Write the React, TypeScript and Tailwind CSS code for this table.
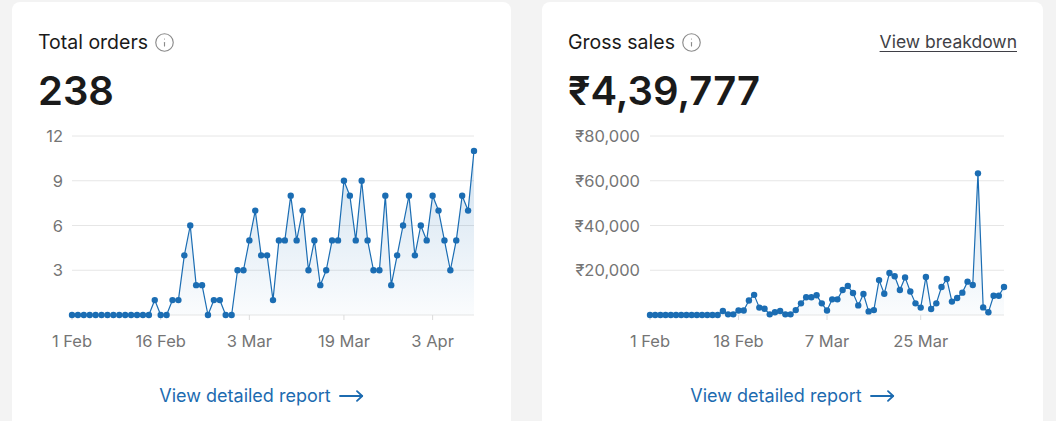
import React from 'react';
import { Info } from 'lucide-react';

const orders = [
  0, 0, 0, 0, 0, 0, 0, 0, 0, 0, 0, 0, 0, 0,
  1, 0, 0, 1, 1, 4, 6, 2, 2, 0, 1, 1, 0, 0,
  3, 3, 5, 7, 4, 4, 1, 5, 5, 8, 5, 7, 3, 5, 2, 3, 5, 5,
  9, 8, 5, 9, 5, 3, 3, 8, 2, 4, 6, 8, 4, 6, 5, 8, 7, 5, 3, 5, 8, 7, 11,
];

const sales = [
  0, 0, 0, 0, 0, 0, 0, 0, 0, 0, 0, 0, 0, 0,
  1800, 300, 300, 2000, 2000, 6500, 9000, 3300, 2800, 300, 1200, 1800, 300, 300,
  2200, 5200, 7900, 7900, 8800, 5200, 2000, 7000, 7000, 11200, 13000, 9800, 4300,
  9400, 1600, 2200, 15600, 9500, 18800, 17300, 11200, 16800, 10500, 5200, 3300,
  17000, 2700, 5200, 12500, 16100, 6000, 7600, 10000, 14900, 13400, 63300, 3400,
  1200, 8600, 8600, 12500,
];

interface ChartProps {
  id: string;
  data: number[];
  max: number;
  yTicks: { value: number; label: string }[];
  xTicks: { index: number; label: string }[];
  left: number;
  labelRight: number;
}

const TOP = 16;
const BOTTOM = 195;
const RIGHT = 436;

const LineChart: React.FC<ChartProps> = ({ id, data, max, yTicks, xTicks, left, labelRight }) => {
  const step = (RIGHT - left) / (data.length - 1);
  const px = (i: number) => left + i * step;
  const py = (v: number) => BOTTOM - (v / max) * (BOTTOM - TOP);
  const line = data.map((v, i) => `${i === 0 ? 'M' : 'L'}${px(i).toFixed(2)},${py(v).toFixed(2)}`).join(' ');
  const area = `${line} L${px(data.length - 1).toFixed(2)},${BOTTOM} L${left},${BOTTOM} Z`;

  return (
    <svg width="449" height="236" className="block" style={{ fontFamily: 'Inter, "Noto Sans", sans-serif' }}>
      <defs>
        <linearGradient id={id} x1="0" y1={TOP} x2="0" y2={BOTTOM} gradientUnits="userSpaceOnUse">
          <stop offset="0" stopColor="#1b6db3" stopOpacity="0.22" />
          <stop offset="1" stopColor="#1b6db3" stopOpacity="0.02" />
        </linearGradient>
      </defs>
      {yTicks.map((t) => (
        <g key={t.label}>
          <line x1={left} x2={RIGHT} y1={py(t.value)} y2={py(t.value)} stroke="#e6e6e6" strokeWidth="1" />
          <text x={labelRight} y={py(t.value) + 6} textAnchor="end" fontSize="16.5" fill="#757575">
            {t.label}
          </text>
        </g>
      ))}
      <line x1={left} x2={RIGHT} y1={BOTTOM} y2={BOTTOM} stroke="#e6e6e6" strokeWidth="1" />
      {xTicks.map((t) => (
        <g key={t.label}>
          <line x1={px(t.index)} x2={px(t.index)} y1={BOTTOM} y2={BOTTOM + 5} stroke="#dcdcdc" strokeWidth="1" />
          <text x={px(t.index)} y={BOTTOM + 32} textAnchor="middle" fontSize="16.5" fill="#757575">
            {t.label}
          </text>
        </g>
      ))}
      <path d={area} fill={`url(#${id})`} />
      <path d={line} fill="none" stroke="#1b6db3" strokeWidth="1.2" strokeLinejoin="round" />
      {data.map((v, i) => (
        <circle key={i} cx={px(i)} cy={py(v)} r="3.2" fill="#1b6db3" />
      ))}
    </svg>
  );
};

const DetailLink: React.FC = () => (
  <div className="mt-[26px] flex justify-center">
    <a href="#" className="flex items-center gap-2 text-[18px] text-[#1c6bb0]">
      View detailed report
      <svg width="25" height="12" viewBox="0 0 25 12" fill="none" stroke="#1c6bb0" strokeWidth="1.8" strokeLinecap="round" strokeLinejoin="round">
        <path d="M1 6h22" />
        <path d="M18 1.2 23.2 6 18 10.8" />
      </svg>
    </a>
  </div>
);

const App: React.FC = () => {
  return (
    <div
      className="flex h-[421px] gap-[31px] overflow-hidden bg-[#f3f3f3] pl-3 pr-[13px] pt-[2px]"
      style={{ fontFamily: 'Inter, "Noto Sans", sans-serif' }}
    >
      <div className="h-[440px] w-[499px] rounded-lg bg-white px-[26px] pt-[26px]">
        <div className="flex items-center">
          <h2 className="text-[19.5px] leading-7 text-[#1a1a1a]">Total orders</h2>
          <Info size={21} strokeWidth={1.3} className="ml-[6px] text-[#8a8a8a]" />
        </div>
        <div className="mt-[11px] text-[40px] font-semibold leading-[48px] text-[#1a1a1a]">238</div>
        <div className="mt-[5px]">
          <LineChart
            id="ordersFill"
            data={orders}
            max={12}
            left={34}
            labelRight={25}
            yTicks={[
              { value: 12, label: '12' },
              { value: 9, label: '9' },
              { value: 6, label: '6' },
              { value: 3, label: '3' },
            ]}
            xTicks={[
              { index: 0, label: '1 Feb' },
              { index: 15, label: '16 Feb' },
              { index: 30, label: '3 Mar' },
              { index: 46, label: '19 Mar' },
              { index: 61, label: '3 Apr' },
            ]}
          />
        </div>
        <DetailLink />
      </div>

      <div className="h-[440px] flex-1 rounded-lg bg-white px-[26px] pt-[26px]">
        <div className="flex items-center justify-between">
          <div className="flex items-center">
            <h2 className="text-[19.5px] leading-7 text-[#1a1a1a]">Gross sales</h2>
            <Info size={21} strokeWidth={1.3} className="ml-[6px] text-[#8a8a8a]" />
          </div>
          <a href="#" className="text-[17.5px] text-[#3f3f46] underline underline-offset-[3px]">
            View breakdown
          </a>
        </div>
        <div className="mt-[11px] text-[40px] font-semibold leading-[48px] text-[#1a1a1a]">₹4,39,777</div>
        <div className="mt-[5px]">
          <LineChart
            id="salesFill"
            data={sales}
            max={80000}
            left={82}
            labelRight={72}
            yTicks={[
              { value: 80000, label: '₹80,000' },
              { value: 60000, label: '₹60,000' },
              { value: 40000, label: '₹40,000' },
              { value: 20000, label: '₹20,000' },
            ]}
            xTicks={[
              { index: 0, label: '1 Feb' },
              { index: 17, label: '18 Feb' },
              { index: 34, label: '7 Mar' },
              { index: 52, label: '25 Mar' },
            ]}
          />
        </div>
        <DetailLink />
      </div>
    </div>
  );
};

export default App;
